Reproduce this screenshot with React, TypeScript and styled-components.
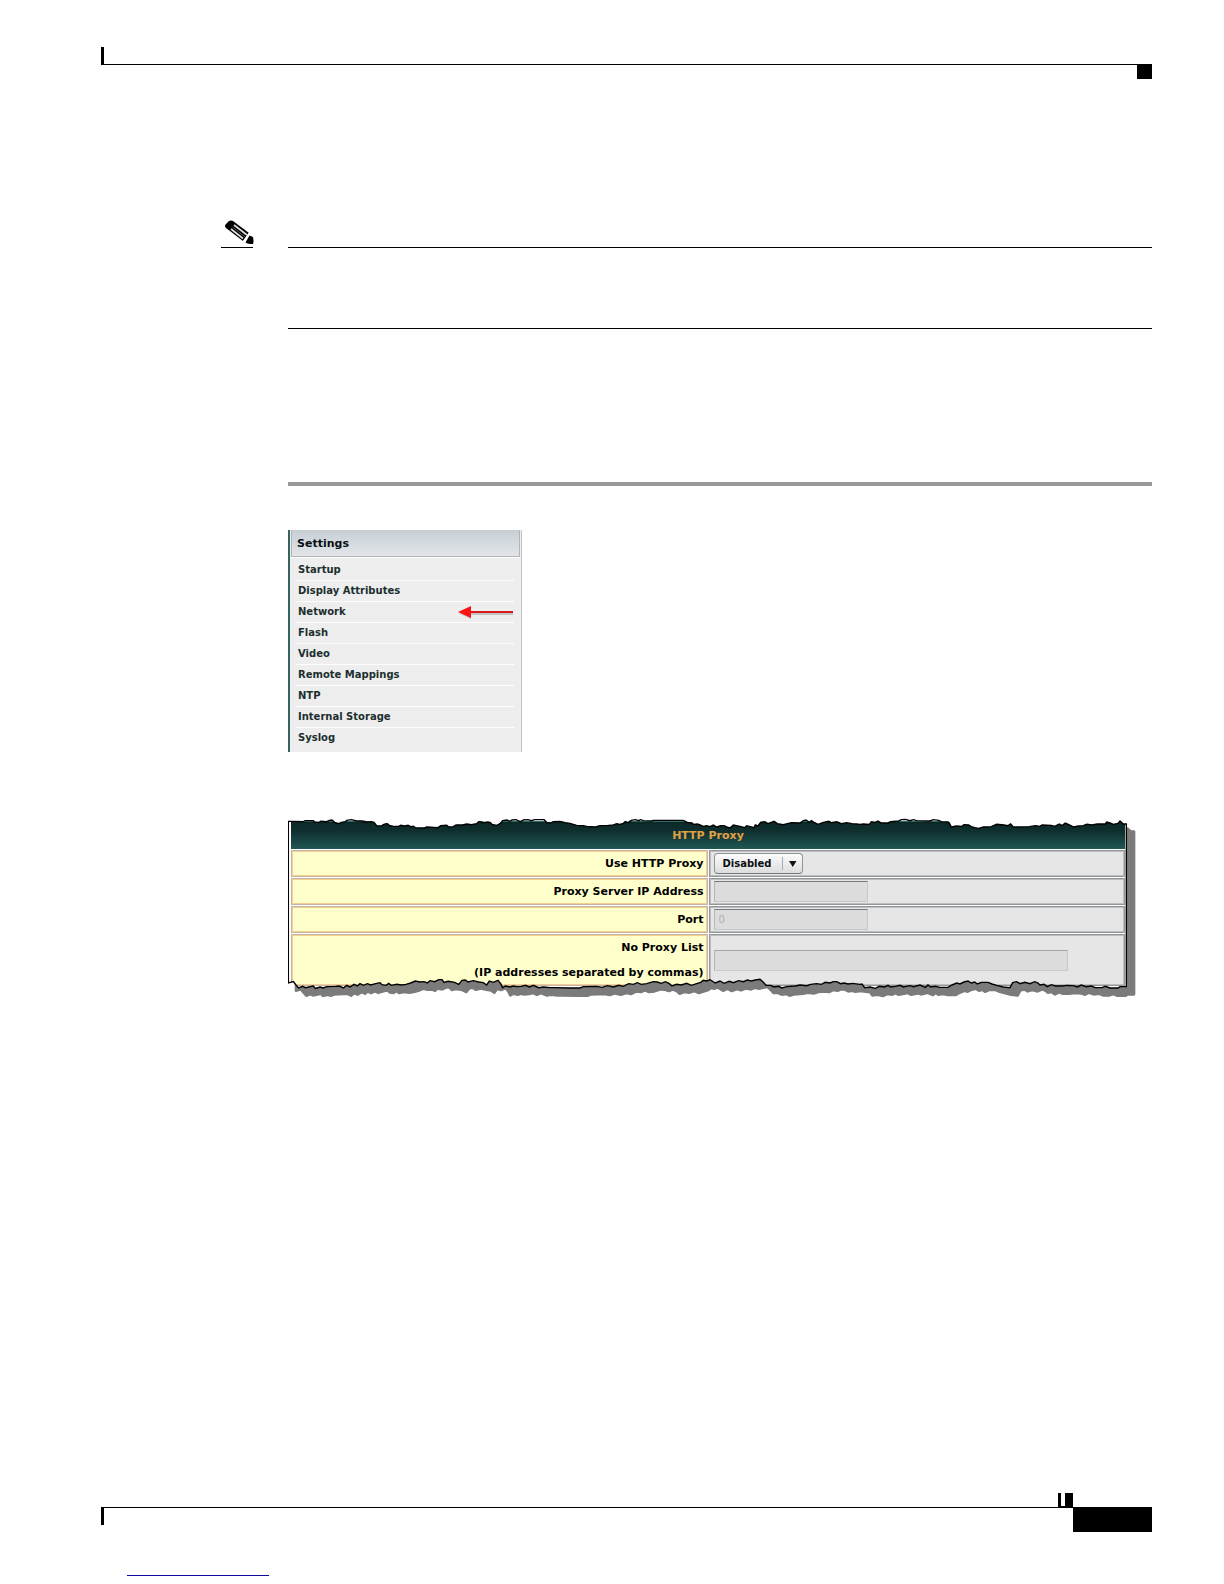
import React from "react";
import styled, { createGlobalStyle, css } from "styled-components";

const GlobalStyle = createGlobalStyle`
  * { box-sizing: border-box; }
  body { margin: 0; background: #fff; font-family: "DejaVu Sans", Verdana, sans-serif; }
`;

const Page = styled.div`
  display: flex;
  flex-direction: column;
  padding: 47px 72px 8px 101px;
`;

const HeaderRule = styled.header`
  display: flex;
  flex-direction: column;
`;

const Tick = styled.div`
  width: 3px;
  height: 17px;
  background: #000;
`;

const Rule = styled.div<{ $thick?: boolean }>`
  height: ${(p) => (p.$thick ? 4 : 1)}px;
  background: ${(p) => (p.$thick ? "#999" : "#000")};
`;

const CornerSquare = styled.div`
  width: 15px;
  height: 14px;
  align-self: flex-end;
  background: #000;
`;

const NoteRow = styled.div`
  display: grid;
  grid-template-columns: 32px 1fr;
  column-gap: 35px;
  align-items: end;
  margin: 141px 0 0 120px;
`;

const NoteIcon = styled.div`
  display: flex;
  flex-direction: column;
  border-bottom: 1px solid #000;

  svg { margin: 0 0 3px 4px; }
`;

const Body = styled.main`
  display: flex;
  flex-direction: column;
  margin-left: 187px;
  padding-top: 80px;
`;

const RuleGroup = styled.div`
  display: flex;
  flex-direction: column;
  gap: 153px;
  margin-bottom: 44px;
`;

const SettingsPanel = styled.nav`
  width: 234px;
  border-left: 2px solid #356360;
  border-right: 1px solid #c2c5c8;
  background: #eee;
  padding-bottom: 3px;
`;

const PanelTitle = styled.h2`
  margin: 0 1px 3px;
  padding-left: 5px;
  height: 27px;
  line-height: 25px;
  font-size: 11px;
  color: #0b0f12;
  border: 1px solid #b1b5b8;
  border-top-color: #c6cbd0;
  background: linear-gradient(#c7ced4, #d3dae0 45%, #e3e5e7);
  box-shadow: 0 1px 0 #fff;
`;

const MenuList = styled.ul`
  list-style: none;
  margin: 0 7px 0 6px;
  padding: 0;
`;

const MenuItem = styled.li`
  display: flex;
  align-items: center;
  justify-content: space-between;
  height: 21px;
  border-bottom: 1px solid #fff;

  &:last-child { border-bottom-color: transparent; }
`;

const MenuLink = styled.a`
  padding-left: 2px;
  font-size: 10px;
  line-height: 20px;
  font-weight: bold;
  color: #1c2e2e;
  text-decoration: none;
`;

const TornSheet = styled.section`
  position: relative;
  margin: 63px 17px 0 0;
`;

const layer = css`
  position: absolute;
  inset: 0;
  width: 100%;
  height: 100%;
  pointer-events: none;
`;

const SheetDrawing = styled.svg`
  ${layer}
`;

const SheetContent = styled.div`
  position: relative;
  padding: 5px 9px 10px 2px;
  background: #fff;
  clip-path: url(#torn-sheet);
`;

const ProxyTable = styled.table`
  width: 100%;
  table-layout: fixed;
  border-collapse: separate;
  border-spacing: 1px;
  font-size: 11px;
`;

const TableTitle = styled.th`
  height: 28px;
  padding: 0;
  color: #e2a243;
  line-height: 26px;
  border-top: 1px solid #2d6b6b;
  background: linear-gradient(#0b2827, #0f302f 35%, #1f5755);
`;

const LabelCell = styled.th`
  padding: 0 3px 0 0;
  line-height: 25px;
  text-align: right;
  color: #000;
  background: #ffffcb;
  border: 1px solid #c5b4a8;
  box-shadow: inset 0 0 0 1px #f3d08f;

  label { display: block; }
`;

const ValueCell = styled.td`
  padding: 0 4px;
  background: #e6e6e6;
  border: 1px solid #929698;
  box-shadow: inset 0 0 0 1px #bcbfc1;
`;

const TextField = styled.input<{ $wide?: boolean }>`
  display: block;
  width: ${(p) => (p.$wide ? 354 : 154)}px;
  max-width: 100%;
  height: 21px;
  padding: 0 4px;
  font: 10px "DejaVu Sans", Verdana, sans-serif;
  color: #aeaeae;
  border: 1px solid #c8cac9;
  border-top-color: ${(p) => (p.$wide ? "#a5a7a7" : "#777")};
  border-left-color: #b5b7b7;
  border-radius: 0;
  background: #dcdcdc;
`;

const SelectBox = styled.div`
  position: relative;
  width: 89px;
  height: 21px;

  svg { ${layer} }
`;

const Select = styled.select`
  appearance: none;
  display: block;
  width: 100%;
  height: 100%;
  padding: 0 18px 0 8px;
  font: bold 10px "DejaVu Sans", Verdana, sans-serif;
  color: #0b1013;
  border: 1px solid #8f9396;
  border-bottom-color: #74787b;
  border-radius: 4px;
  background: linear-gradient(#fcfcfc, #ececed 50%, #dcdddd);
`;

const Footer = styled.footer`
  display: flex;
  flex-direction: column;
  margin-top: 496px;
`;

const FooterMarks = styled.div`
  display: flex;
  align-self: flex-end;
  gap: 4px;
  margin-right: 79px;
  border-bottom: 1px solid #000;
`;

const Mark = styled.div<{ $wide?: boolean }>`
  width: ${(p) => (p.$wide ? 8 : 3)}px;
  height: 13px;
  background: #000;
`;

const FooterRow = styled.div`
  display: flex;
  justify-content: space-between;
  border-top: 1px solid #000;
`;

const PageBlock = styled.div`
  width: 79px;
  height: 24px;
  background: #000;
`;

const BlankLink = styled.a`
  width: 142px;
  height: 44px;
  margin-left: 26px;
  border-bottom: 1px solid #0c0c9c;
`;

// Sheet edges, drawn in a 2541 x 546 box: top runs left to right, bottom right to left.
const edge = (points: string, dx: number) =>
  points.split(" ").map((p) => {
    const [x, y] = p.split(",").map(Number);
    return [x + dx, y - 30];
  });

const topEdge = [
  ...edge("25,49 42,49 70,50 76,47 100,47 104,51 118,52 122,49 140,50 148,46 156,45 164,52 176,56 184,52 196,50 200,46 214,44 230,48 246,48 262,51 274,50 282,52 290,62 304,63 310,59 316,57 322,56 328,61 340,64 356,64 362,61 374,63 384,61 392,65 400,64 406,68 424,69 434,69 440,66 474,68 482,62 500,61 506,66 520,65 528,60 548,60 560,57 574,59 590,56 596,50 606,51 612,53 622,51 630,52 636,58 650,61 660,56 668,47 680,45 690,49 696,45 708,44 714,47 722,50 730,45 744,44 754,47 764,44 780,44 792,44 800,52 812,54 820,50 840,49 856,53", -24),
  ...edge("0,55 10,58 20,61 40,62 50,64 76,66 90,62 110,62 130,60 140,56 150,58 160,55 166,50 174,53 184,46 196,44 206,47 212,44 220,47 244,48 250,46 340,46 352,52 366,54 370,58 382,57 390,60 400,64 410,62 420,65 430,60 440,66 452,62 462,62 470,66 480,69 490,60 510,64 524,68 530,62 552,68 556,60 564,63 572,52 584,50 594,56 604,52 612,49 622,56 640,59 652,56 664,53 690,54 700,47 708,45 718,52 724,47 732,52 744,58 760,52 776,49 784,53 800,50 814,56 830,53 846,56 860,57", 846),
  ...edge("0,58 10,57 28,58 34,50 46,52 54,48 64,54 84,54 92,50 116,48 124,44 136,43 150,47 160,44 170,47 210,48 220,44 236,46 244,50 264,51 268,54 274,66 290,63 306,64 312,59 326,60 334,65 344,68 356,70 370,66 394,65 410,58 432,60 444,62 452,57 460,66 508,65 526,62 540,64 546,60 574,61 584,64 598,57 606,62 616,54 628,60 640,66 656,63 670,62 680,58 696,60 712,57 736,57 740,51 750,54 760,58 774,55 780,48 790,57 799,57", 1716),
];

const bottomEdge = [
  ...edge("25,534 40,530 48,540 56,549 68,544 76,548 100,543 106,550 120,546 130,549 140,545 166,544 178,543 190,549 200,541 210,546 222,538 232,543 240,536 250,541 262,536 272,540 290,535 300,533 306,539 318,541 326,535 334,541 350,538 364,540 378,538 392,534 406,528 420,531 432,530 442,534 450,527 464,530 476,524 486,524 492,532 504,529 524,532 536,538 546,526 556,525 564,531 580,527 596,531 610,533 620,540 628,528 640,532 654,526 662,536 668,548 676,543 690,546 700,543 710,545 724,544 736,541 748,546 760,541 776,548 790,546 810,548 826,548", -24),
  ...edge("0,549 30,549 40,545 80,544 96,547 112,542 130,546 146,541 160,544 176,536 190,538 202,533 214,538 230,536 250,530 262,531 274,535 286,530 298,536 306,543 320,538 334,540 350,535 364,541 380,536 392,532 400,526 410,528 420,524 436,534 450,528 462,535 478,529 490,533 506,527 520,530 532,525 544,528 556,525 570,523 580,532 588,541 602,541 612,546 626,544 636,549 650,545 676,543 690,540 710,542 722,538 740,536 754,538 766,532 780,534 790,530 800,530 812,536 822,534 834,537 848,535", 846),
  ...edge("0,538 6,537 14,548 30,546 46,550 58,544 74,546 84,541 92,546 106,544 120,541 130,546 150,542 160,545 180,540 196,547 204,540 212,546 226,544 240,547 264,547 276,540 290,534 300,537 312,531 324,528 334,534 344,531 352,537 364,532 384,532 396,537 410,541 430,546 450,548 458,533 470,530 480,536 494,532 510,536 524,530 534,534 540,540 552,538 562,545 574,539 586,543 606,543 620,541 640,542 652,546 664,540 678,545 694,543 706,548 726,548 736,544 750,549 774,549 780,545 799,545", 1716),
].reverse();

const sheetPath = "M" + [...topEdge, ...bottomEdge].map((p) => p.join(" ")).join("L") + "Z";

const menu = [
  "Startup",
  "Display Attributes",
  "Network",
  "Flash",
  "Video",
  "Remote Mappings",
  "NTP",
  "Internal Storage",
  "Syslog",
];

const Pencil = () => (
  <svg width="29" height="24" viewBox="0 0 29 24" aria-hidden="true">
    <path d="M0 6Q0 5 1 4L4 1Q6 0 8 1L24 13L18 21L1 8Q0 7 0 6Z" fill="#000" />
    <path d="M9 5L22 15M6 9L18 18.500" stroke="#ddd" strokeWidth="1.6" />
    <path d="M7.500 7L20 16.800" stroke="#555" strokeWidth="1" />
    <path d="M24.500 13L18.500 21.500" stroke="#fff" strokeWidth="1.6" />
    <path d="M24.500 15.500L28 17Q29 21 28 24Q24 24.500 20.500 22.500Z" fill="#000" />
  </svg>
);

const RedArrow = () => (
  <svg width="56" height="14" viewBox="0 0 56 14" aria-hidden="true">
    <path d="M1 8.500L13 3V14Z M12 7.500H55V10H12Z" fill="#000" opacity="0.18" />
    <path d="M12 7H55" stroke="#d8191c" strokeWidth="2" />
    <path d="M0 7L13 1V13Z" fill="#fb1414" />
  </svg>
);

export default function App() {
  return (
    <>
      <GlobalStyle />
      <Page>
        <HeaderRule>
          <Tick />
          <Rule />
          <CornerSquare />
        </HeaderRule>

        <NoteRow>
          <NoteIcon>
            <Pencil />
          </NoteIcon>
          <Rule />
        </NoteRow>

        <Body>
          <RuleGroup>
            <Rule />
            <Rule $thick />
          </RuleGroup>

          <SettingsPanel>
            <PanelTitle>Settings</PanelTitle>
            <MenuList>
              {menu.map((name) => (
                <MenuItem key={name}>
                  <MenuLink href="#">{name}</MenuLink>
                  {name === "Network" && <RedArrow />}
                </MenuItem>
              ))}
            </MenuList>
          </SettingsPanel>

          <TornSheet>
            <SheetDrawing viewBox="0 0 2541 546" preserveAspectRatio="none" overflow="visible">
              <defs>
                <clipPath id="torn-sheet" clipPathUnits="objectBoundingBox">
                  <path d={sheetPath} transform={`scale(${1 / 2541} ${1 / 546})`} />
                </clipPath>
              </defs>
              <path
                d={sheetPath}
                transform="translate(23 23)"
                fill="#7b7b7b"
                stroke="#7b7b7b"
                strokeWidth="8"
                strokeLinejoin="round"
              />
            </SheetDrawing>
            <SheetContent>
              <ProxyTable>
                <thead>
                  <tr>
                    <TableTitle colSpan={2}>HTTP Proxy</TableTitle>
                  </tr>
                </thead>
                <tbody>
                  <tr>
                    <LabelCell scope="row">
                      <label htmlFor="use-proxy">Use HTTP Proxy</label>
                    </LabelCell>
                    <ValueCell>
                      <SelectBox>
                        <Select id="use-proxy" defaultValue="Disabled">
                          <option>Disabled</option>
                        </Select>
                        <svg viewBox="0 0 89 21" aria-hidden="true">
                          <path d="M68.500 4V17" stroke="#a9adb0" />
                          <path d="M75 8H82.500L78.750 14Z" fill="#111" />
                        </svg>
                      </SelectBox>
                    </ValueCell>
                  </tr>
                  <tr>
                    <LabelCell scope="row">
                      <label htmlFor="proxy-ip">Proxy Server IP Address</label>
                    </LabelCell>
                    <ValueCell>
                      <TextField id="proxy-ip" type="text" disabled />
                    </ValueCell>
                  </tr>
                  <tr>
                    <LabelCell scope="row">
                      <label htmlFor="proxy-port">Port</label>
                    </LabelCell>
                    <ValueCell>
                      <TextField id="proxy-port" type="text" defaultValue="0" disabled />
                    </ValueCell>
                  </tr>
                  <tr>
                    <LabelCell scope="row">
                      <label htmlFor="no-proxy">
                        No Proxy List
                        <br />
                        (IP addresses separated by commas)
                      </label>
                    </LabelCell>
                    <ValueCell>
                      <TextField id="no-proxy" type="text" $wide disabled />
                    </ValueCell>
                  </tr>
                </tbody>
              </ProxyTable>
            </SheetContent>
            <SheetDrawing viewBox="0 0 2541 546" preserveAspectRatio="none" aria-hidden="true">
              <path
                d={sheetPath}
                fill="none"
                stroke="#000"
                strokeWidth="1.4"
                vectorEffect="non-scaling-stroke"
              />
            </SheetDrawing>
          </TornSheet>
        </Body>

        <Footer>
          <FooterMarks>
            <Mark />
            <Mark $wide />
          </FooterMarks>
          <FooterRow>
            <Tick />
            <PageBlock />
          </FooterRow>
          <BlankLink href="#" aria-label="Footer link" />
        </Footer>
      </Page>
    </>
  );
}
